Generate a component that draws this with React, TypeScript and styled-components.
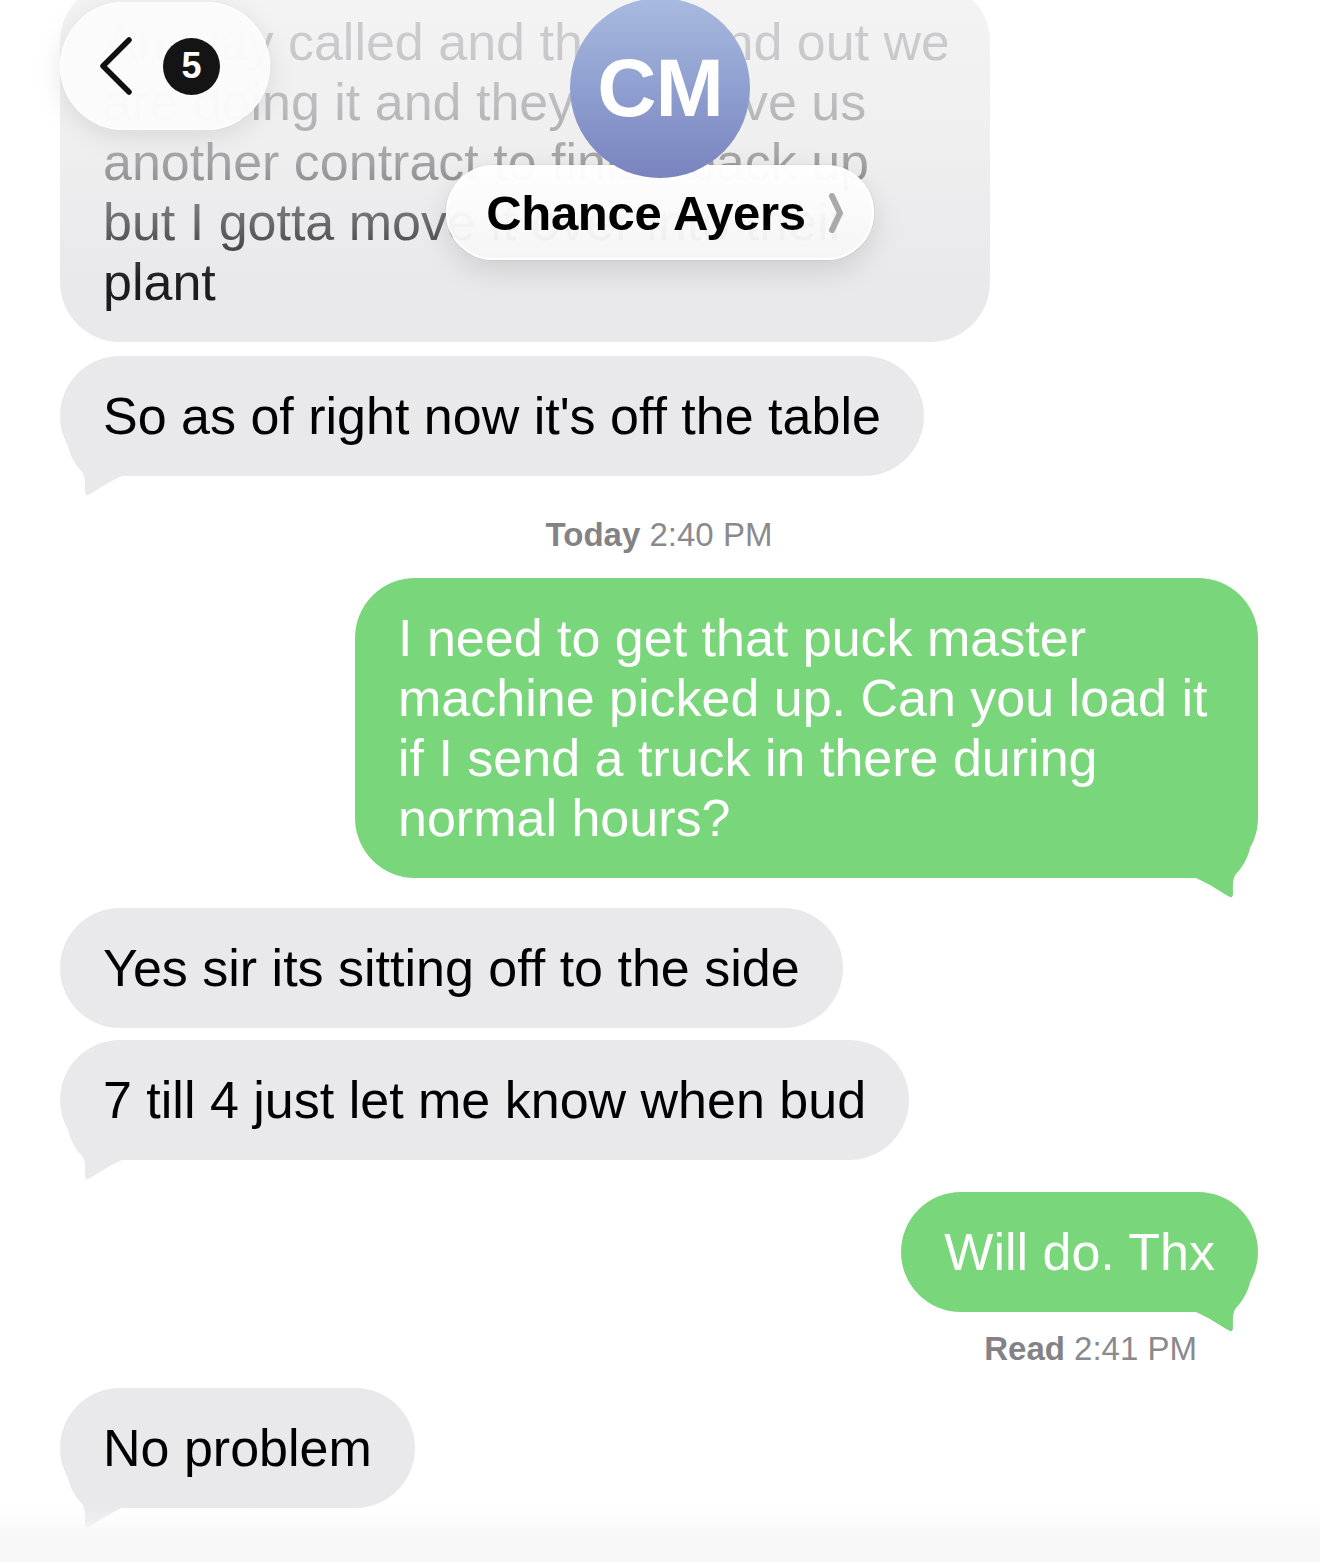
import React from "react";
import styled, { createGlobalStyle } from "styled-components";

const GlobalStyle = createGlobalStyle`
  html, body { margin: 0; padding: 0; background: #ffffff; }
  body { font-family: "Liberation Sans", Arial, sans-serif; -webkit-font-smoothing: antialiased; }
`;

const Screen = styled.div`
  position: relative;
  width: 1320px;
  height: 1562px;
  overflow: hidden;
  background: #ffffff;
`;

const Thread = styled.div`
  display: flex;
  flex-direction: column;
  margin-top: -18px;
  padding: 0 62px 0 60px;
`;

const Row = styled.div<{ $out?: boolean; $gap: number }>`
  display: flex;
  justify-content: ${(p) => (p.$out ? "flex-end" : "flex-start")};
  margin-top: ${(p) => p.$gap}px;
`;

const Bubble = styled.div<{ $out?: boolean; $w?: number; $fade?: boolean }>`
  position: relative;
  box-sizing: border-box;
  width: ${(p) => (p.$w ? `${p.$w}px` : "fit-content")};
  padding: 30px 43px;
  border-radius: 60px;
  background: ${(p) =>
    p.$out
      ? "#79d67b"
      : p.$fade
      ? "linear-gradient(to bottom, #f4f4f5 0px, #efeff0 160px, #e9e9eb 300px)"
      : "#e9e9eb"};
  color: ${(p) => (p.$out ? "#ffffff" : "#000000")};
  font-size: 52px;
  line-height: 60px;
  white-space: nowrap;
`;

const FadedText = styled.div`
  background: linear-gradient(
    to bottom,
    #cbcbcd 30px,
    #bdbdbf 90px,
    #a3a3a5 150px,
    #6b6b6d 210px,
    #1c1c1e 270px
  );
  -webkit-background-clip: text;
  background-clip: text;
  color: transparent;
`;

const TailSvg = styled.svg<{ $out?: boolean }>`
  position: absolute;
  bottom: -20px;
  ${(p) => (p.$out ? "right: 0;" : "left: 0;")}
  width: 70px;
  height: 50px;
  transform: ${(p) => (p.$out ? "scaleX(-1)" : "none")};
  color: ${(p) => (p.$out ? "#79d67b" : "#e9e9eb")};
`;

const Tail = ({ out }: { out?: boolean }) => (
  <TailSvg $out={out} viewBox="0 0 70 50">
    <path
      d="M 8 0 C 10 10, 16 20, 22 26 C 26 31, 25 40, 25 45 C 25 48, 26 50, 28 49 C 36 45, 48 36, 62 30 L 62 0 Z"
      fill="currentColor"
    />
  </TailSvg>
);

const Stamp = styled.div<{ $gap: number; $right?: boolean }>`
  margin-top: ${(p) => p.$gap}px;
  font-size: 33px;
  line-height: 40px;
  color: #8a8a8e;
  text-align: ${(p) => (p.$right ? "right" : "center")};
  padding-right: ${(p) => (p.$right ? "61px" : "0")};
  b {
    font-weight: 700;
    color: #838387;
  }
`;

const BottomFade = styled.div`
  position: absolute;
  left: 0;
  right: 0;
  bottom: 0;
  height: 56px;
  background: linear-gradient(to bottom, rgba(247, 247, 248, 0) 0%, rgba(247, 247, 248, 0.9) 60%, rgba(248, 248, 249, 1) 100%);
  pointer-events: none;
`;

const BackPill = styled.div`
  position: absolute;
  left: 60px;
  top: 2px;
  width: 210px;
  height: 128px;
  box-sizing: border-box;
  padding-left: 38px;
  border-radius: 64px;
  background: rgba(251, 251, 251, 0.97);
  box-shadow: 0 6px 28px rgba(0, 0, 0, 0.1), 0 0 0 1px rgba(255, 255, 255, 0.9) inset;
  display: flex;
  align-items: center;
  gap: 29px;
`;

const Badge = styled.div`
  width: 57px;
  height: 57px;
  border-radius: 50%;
  background: #141414;
  color: #ffffff;
  font-size: 36px;
  font-weight: 700;
  display: flex;
  align-items: center;
  justify-content: center;
`;

const Center = styled.div`
  position: absolute;
  left: 0;
  right: 0;
  top: -2px;
  display: flex;
  flex-direction: column;
  align-items: center;
`;

const Avatar = styled.div`
  position: relative;
  z-index: 2;
  width: 180px;
  height: 180px;
  border-radius: 50%;
  background: linear-gradient(to bottom, #a8badf 0%, #8f9fd0 50%, #7983be 100%);
  color: #ffffff;
  font-size: 82px;
  font-weight: 700;
  letter-spacing: -1px;
  display: flex;
  align-items: center;
  justify-content: center;
`;

const NamePill = styled.div`
  position: relative;
  z-index: 1;
  margin-top: -13px;
  height: 95px;
  box-sizing: border-box;
  padding: 0 28px 0 38px;
  border-radius: 48px;
  background: linear-gradient(to bottom, rgba(255, 255, 255, 0.97), rgba(246, 246, 247, 0.95));
  border: 2px solid rgba(255, 255, 255, 1);
  box-shadow: 0 10px 30px rgba(0, 0, 0, 0.12), 0 0 0 1px rgba(0, 0, 0, 0.04);
  display: flex;
  align-items: center;
  gap: 22px;
`;

const Name = styled.span`
  font-size: 49px;
  font-weight: 700;
  color: #000000;
  letter-spacing: -0.3px;
`;

export default function App() {
  return (
    <Screen>
      <GlobalStyle />
      <Thread>
        <Row $gap={0}>
          <Bubble $w={930} $fade>
            <FadedText>
              Amway called and they found out we
              <br />
              are doing it and they just gave us
              <br />
              another contract to finish back up
              <br />
              but I gotta move it over into their
              <br />
              plant
            </FadedText>
          </Bubble>
        </Row>
        <Row $gap={14}>
          <Bubble>
            So as of right now it's off the table
            <Tail />
          </Bubble>
        </Row>
        <Stamp $gap={39}>
          <b>Today</b> 2:40 PM
        </Stamp>
        <Row $out $gap={23}>
          <Bubble $out $w={903}>
            I need to get that puck master
            <br />
            machine picked up. Can you load it
            <br />
            if I send a truck in there during
            <br />
            normal hours?
            <Tail out />
          </Bubble>
        </Row>
        <Row $gap={30}>
          <Bubble>Yes sir its sitting off to the side</Bubble>
        </Row>
        <Row $gap={12}>
          <Bubble>
            7 till 4 just let me know when bud
            <Tail />
          </Bubble>
        </Row>
        <Row $out $gap={32}>
          <Bubble $out>
            Will do. Thx
            <Tail out />
          </Bubble>
        </Row>
        <Stamp $gap={17} $right>
          <b>Read</b> 2:41 PM
        </Stamp>
        <Row $gap={19}>
          <Bubble>
            No problem
            <Tail />
          </Bubble>
        </Row>
      </Thread>

      <BottomFade />

      <BackPill>
        <svg width="36" height="60" viewBox="0 0 36 60">
          <path d="M 31 4 L 5 30 L 31 56" fill="none" stroke="#111" strokeWidth="5.5" strokeLinecap="round" strokeLinejoin="round" />
        </svg>
        <Badge>5</Badge>
      </BackPill>

      <Center>
        <Avatar>CM</Avatar>
        <NamePill>
          <Name>Chance Ayers</Name>
          <svg width="16" height="44" viewBox="0 0 16 44">
            <path d="M 4 5 L 12 22 L 4 39" fill="none" stroke="#a9a9ad" strokeWidth="6" strokeLinecap="round" strokeLinejoin="round" />
          </svg>
        </NamePill>
      </Center>
    </Screen>
  );
}
